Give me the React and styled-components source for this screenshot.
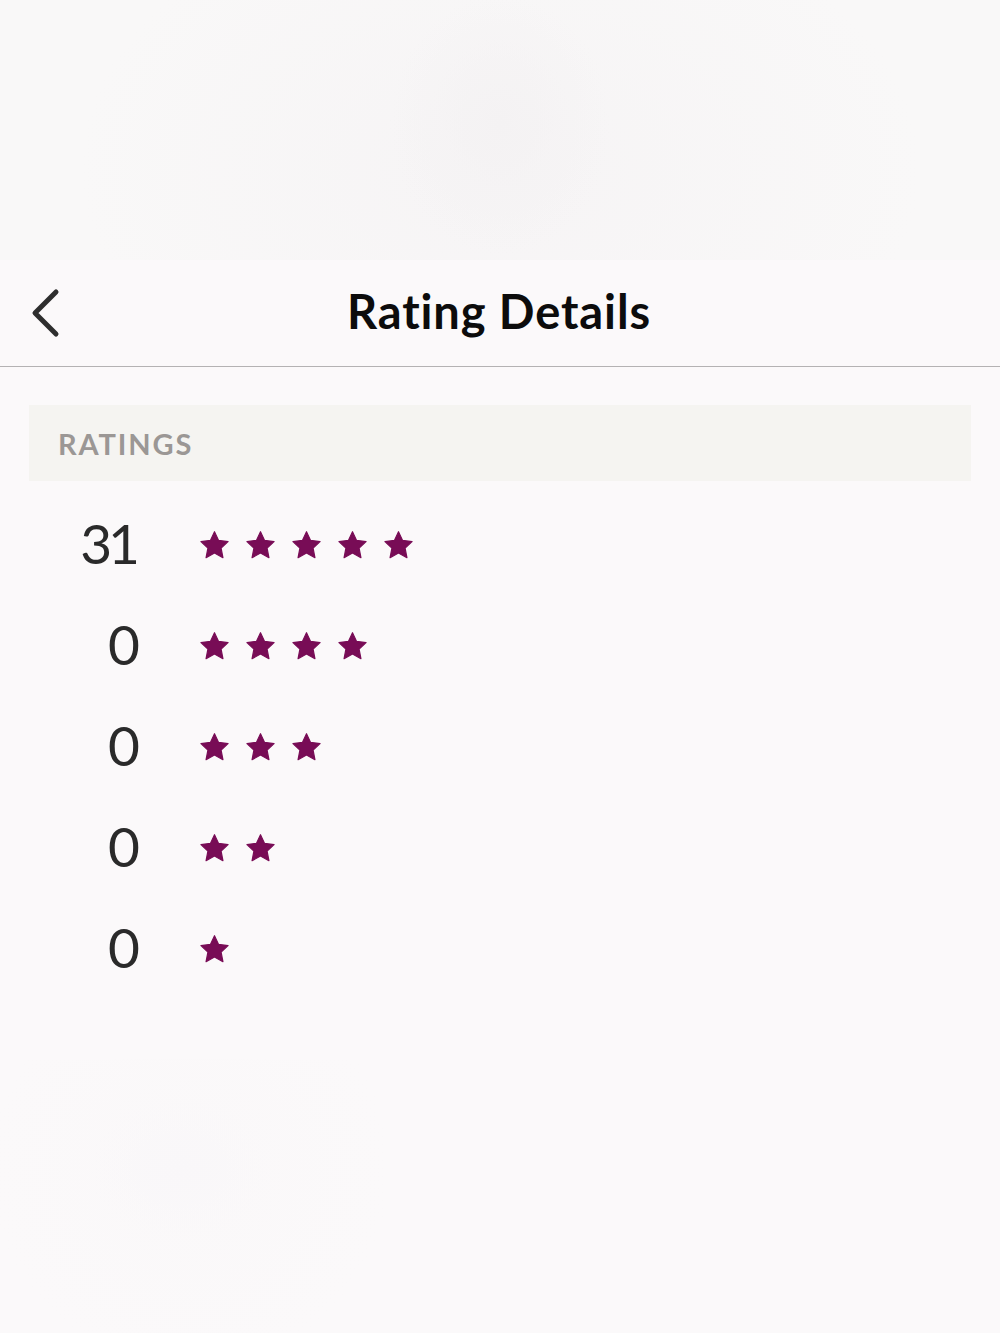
import React from 'react'
import styled, { createGlobalStyle } from 'styled-components'

const GlobalStyle = createGlobalStyle`
	html, body {
		margin: 0;
		padding: 0;
		background: #fbf9fa;
		font-family: Lato, "Open Sans", sans-serif;
	}
`

const ratings = [
	{ stars: 5, count: 31 },
	{ stars: 4, count: 0 },
	{ stars: 3, count: 0 },
	{ stars: 2, count: 0 },
	{ stars: 1, count: 0 },
]

const Star = () => (
	<svg width="29" height="29" viewBox="1 0.2 22 21.4">
		<path
			d="M12 1.2l3.1 6.6 7.2 0.9-5.3 5 1.4 7.2L12 17.3l-6.4 3.6 1.4-7.2-5.3-5 7.2-0.9z"
			fill="#780c56"
			stroke="#780c56"
			strokeWidth="0.9"
			strokeLinejoin="round"
		/>
	</svg>
)

const App = () => (
	<>
		<GlobalStyle />
		<Page>
			<Backdrop />
			<Header>
				<BackButton aria-label="Back">
					<svg width="34" height="50" viewBox="0 0 34 50">
						<path d="M26 4 L5 25 L26 46" fill="none" stroke="#2e2e2e" strokeWidth="5" strokeLinecap="round" strokeLinejoin="round" />
					</svg>
				</BackButton>
				<Title>Rating Details</Title>
			</Header>
			<Content>
				<SectionBand>RATINGS</SectionBand>
				<List>
					{ratings.map(r => (
						<Row key={r.stars}>
							<Count>{r.count}</Count>
							<Stars>
								{Array.from({ length: r.stars }).map((_, i) => <Star key={i} />)}
							</Stars>
						</Row>
					))}
				</List>
				<Footer />
			</Content>
		</Page>
	</>
)

const Page = styled.div`
	display: flex;
	flex-direction: column;
	min-height: 1333px;
	background: #fbf9fa;
`

const Backdrop = styled.div`
	height: 260px;
	background:
		radial-gradient(ellipse 110px 130px at 500px 125px, #f4f2f3 0%, rgba(244,242,243,0) 100%),
		radial-gradient(ellipse 420px 280px at 500px 170px, #f6f4f5 0%, rgba(246,244,245,0) 100%),
		#f9f8f8;
`

const Header = styled.div`
	position: relative;
	display: flex;
	align-items: center;
	justify-content: center;
	height: 106px;
	background: #fbf9fa;
	border-bottom: 1.5px solid #b4b2b3;
`

const BackButton = styled.button`
	position: absolute;
	left: 30px;
	top: 28px;
	display: flex;
	padding: 0;
	border: none;
	background: none;
	cursor: pointer;
`

const Title = styled.h1`
	margin: 0;
	font-family: Lato, sans-serif;
	font-weight: 700;
	font-size: 47px;
	color: #0c0c0c;
	letter-spacing: 0.9px;
	transform: translate(-1px, -2px);
`

const Content = styled.div`
	display: flex;
	flex-direction: column;
	padding: 38px 29px 0;
	flex: 1;
`

const SectionBand = styled.div`
	display: flex;
	align-items: center;
	height: 76px;
	padding-left: 29px;
	background: #f5f4f1;
	color: #9b9795;
	font-family: Lato, sans-serif;
	font-weight: 700;
	font-size: 29px;
	letter-spacing: 1.9px;
`

const List = styled.div`
	display: flex;
	flex-direction: column;
	padding-top: 13px;
`

const Row = styled.div`
	display: flex;
	align-items: center;
	height: 101px;
`

const Count = styled.div`
	width: 107px;
	text-align: right;
	font-family: Lato, sans-serif;
	font-weight: 400;
	font-size: 55px;
	color: #2a2a2a;
	line-height: 1;
	letter-spacing: -4px;
	transform: translateY(-1px);
`

const Stars = styled.div`
	display: flex;
	gap: 17px;
	margin-left: 64px;
`

const Footer = styled.div`
	flex: 1;
	margin: 60px -29px 0;
	background:
		radial-gradient(ellipse 90px 70px at 180px 110px, #f9f7f9 0%, rgba(249,247,249,0) 100%),
		radial-gradient(ellipse 200px 200px at 190px 110px, #faf8f9 0%, rgba(250,248,249,0) 100%);
`

export default App
